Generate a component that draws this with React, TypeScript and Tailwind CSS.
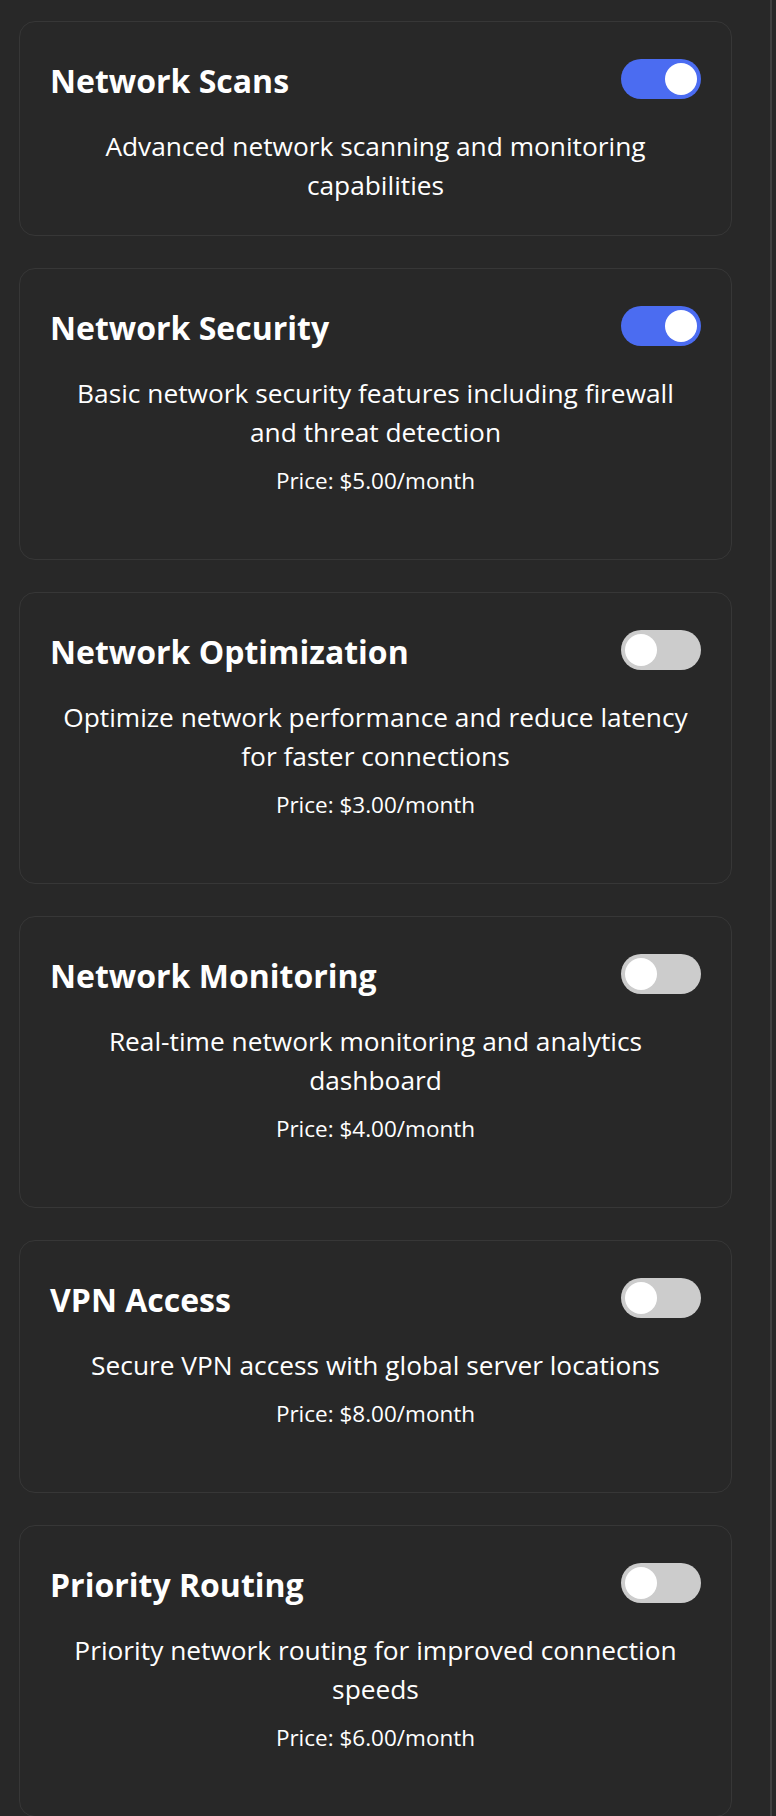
import React, { useState } from 'react';

interface Feature {
  id: string;
  name: string;
  description: string;
  price?: number;
  enabled: boolean;
}

const initialFeatures: Feature[] = [
  { id: 'scans', name: 'Network Scans', description: 'Advanced network scanning and monitoring capabilities', enabled: true },
  { id: 'security', name: 'Network Security', description: 'Basic network security features including firewall and threat detection', price: 5, enabled: true },
  { id: 'optimization', name: 'Network Optimization', description: 'Optimize network performance and reduce latency for faster connections', price: 3, enabled: false },
  { id: 'monitoring', name: 'Network Monitoring', description: 'Real-time network monitoring and analytics dashboard', price: 4, enabled: false },
  { id: 'vpn', name: 'VPN Access', description: 'Secure VPN access with global server locations', price: 8, enabled: false },
  { id: 'routing', name: 'Priority Routing', description: 'Priority network routing for improved connection speeds', price: 6, enabled: false },
];

function Toggle({ checked, onChange }: { checked: boolean; onChange: () => void }) {
  return (
    <button
      type="button"
      role="switch"
      aria-checked={checked}
      onClick={onChange}
      className={`relative h-10 w-20 shrink-0 rounded-full transition-colors ${checked ? 'bg-[#4b6cf1]' : 'bg-[#cccccc]'}`}
    >
      <span
        className={`absolute left-1 top-1 h-8 w-8 rounded-full bg-white transition-transform ${checked ? 'translate-x-10' : 'translate-x-0'}`}
      />
    </button>
  );
}

function FeatureCard({ feature, onToggle }: { feature: Feature; onToggle: () => void }) {
  return (
    <div className="rounded-2xl border border-[#373737] bg-[#282828] p-[30px]">
      <div className="flex h-[54px] items-center justify-between">
        <h2 className="mt-[4px] text-[32px] font-bold leading-[54px] text-white">{feature.name}</h2>
        <Toggle checked={feature.enabled} onChange={onToggle} />
      </div>
      <p className="mx-auto mt-[21px] max-w-[640px] text-center text-[26.3px] leading-[39px] text-white">
        {feature.description}
      </p>
      {feature.price !== undefined && (
        <p className="mb-[33px] mt-[14px] text-center text-[22.5px] leading-[30px] text-white">
          Price: ${feature.price.toFixed(2)}/month
        </p>
      )}
    </div>
  );
}

export default function App() {
  const [features, setFeatures] = useState(initialFeatures);

  const toggle = (id: string) =>
    setFeatures((prev) => prev.map((f) => (f.id === id ? { ...f, enabled: !f.enabled } : f)));

  return (
    <div className="flex h-[1816px] overflow-hidden bg-[#282828]" style={{ fontFamily: '"Open Sans", "Noto Sans", sans-serif' }}>
      <main className="flex flex-1 flex-col gap-[32px] pb-5 pl-[19px] pr-[38px] pt-[21px]">
        {features.map((f) => (
          <FeatureCard key={f.id} feature={f} onToggle={() => toggle(f.id)} />
        ))}
      </main>
      <div className="mr-[4px] w-[2px] bg-[#404040]" />
    </div>
  );
}
